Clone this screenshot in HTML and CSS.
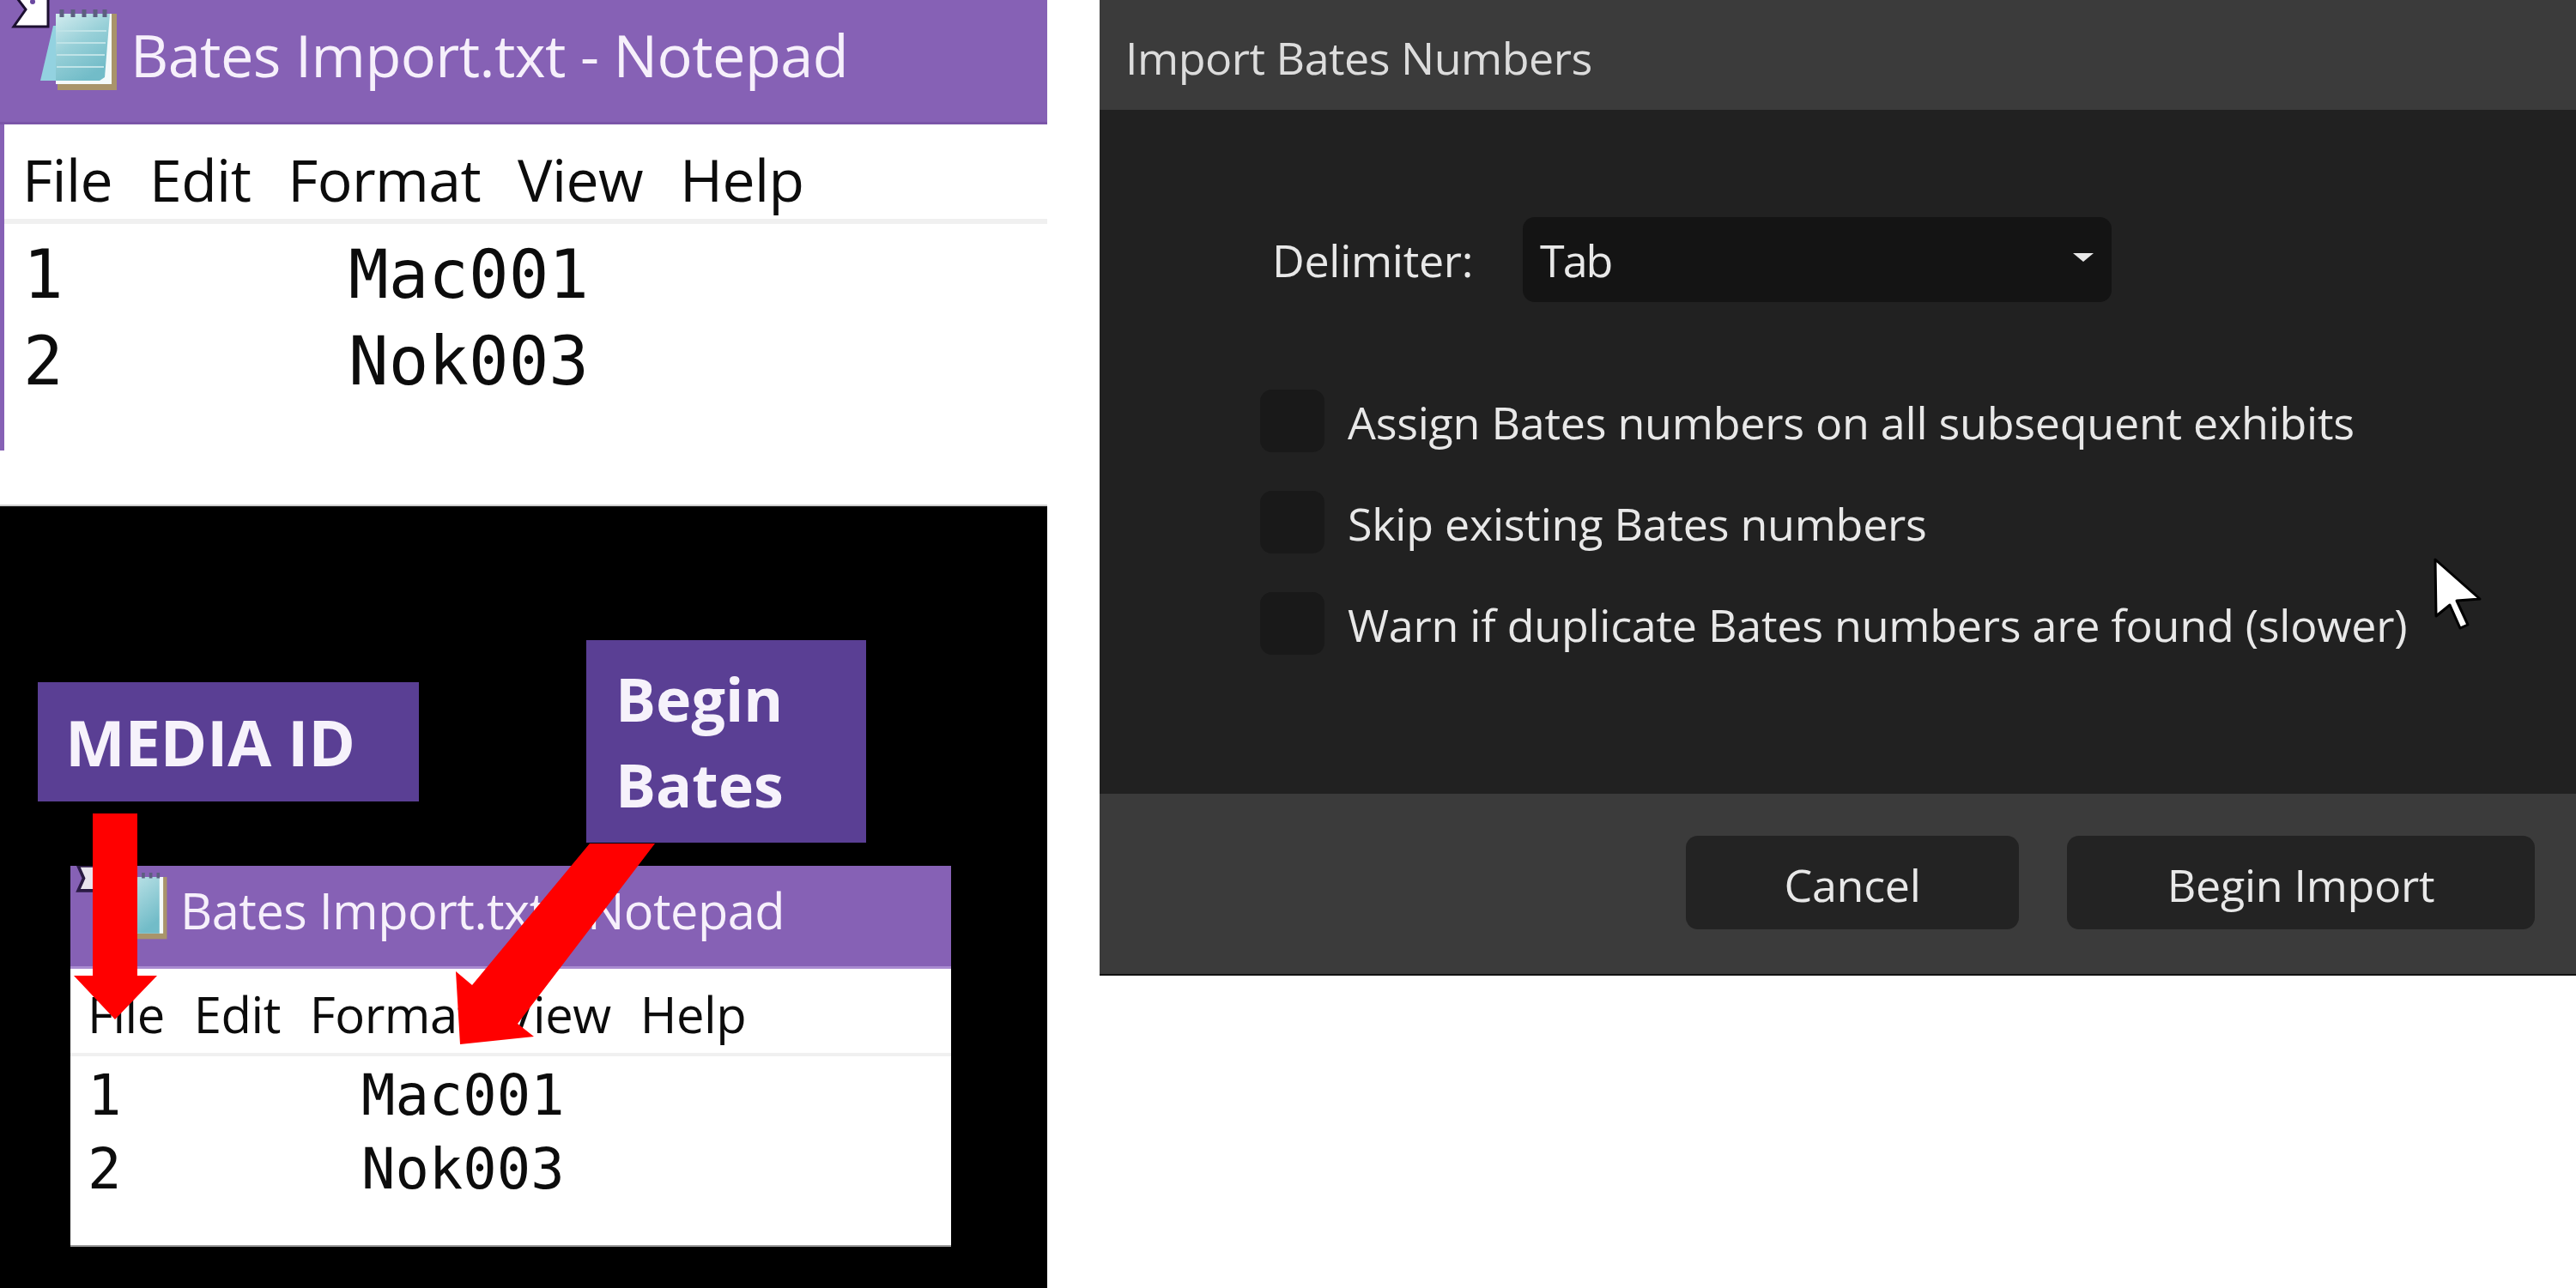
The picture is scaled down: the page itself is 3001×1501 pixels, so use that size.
FILE: index.html
```html
<!DOCTYPE html>
<html lang="en">
<head>
<meta charset="utf-8">
<title>Import Bates Numbers</title>
<link rel="stylesheet" href="styles.css">
</head>
<body>
<main class="page">
  <section class="left">
    <div class="notepad notepad-large">
      <header class="np-title">
        <svg class="np-icon" viewBox="0 0 200 130" aria-hidden="true">
          <defs>
            <linearGradient id="paper" x1="0" y1="0" x2="0.5" y2="1">
              <stop offset="0" stop-color="#d3ecef"/>
              <stop offset="0.5" stop-color="#98d0d8"/>
              <stop offset="1" stop-color="#72bcc8"/>
            </linearGradient>
          </defs>
          <path d="M20 -2L30 11L16 31H56V-2Z" fill="#fff" stroke="#1c1030" stroke-width="3"/>
          <circle cx="38" cy="2" r="3" fill="#6a48a0"/>
          <path d="M47 94L62 30H68V94Z" fill="#93d2e0"/>
          <rect x="67" y="16" width="69" height="89" fill="#a9946a"/>
          <rect x="65" y="16" width="65" height="82" fill="#f4fafa"/>
          <path d="M65 16H128L122 90L116 94H65Z" fill="url(#paper)"/>
          <path d="M66 36H124M66 50H123M66 64H122M66 78H121" stroke="#bfe3e7" stroke-width="2"/>
          <path d="M72 11V20M85 11V20M98 11V20M111 11V20M122 11V20" stroke="#5c5f80" stroke-width="5"/>
        </svg>
        <span class="np-title-text">Bates Import.txt - Notepad</span>
      </header>
      <nav class="np-menu"><span>File</span><span>Edit</span><span>Format</span><span>View</span><span>Help</span></nav>
      <div class="np-body">
        <span>1</span><span>Mac001</span>
        <span>2</span><span>Nok003</span>
      </div>
    </div>

    <div class="annotated">
      <div class="notepad notepad-small">
        <header class="np-title">
          <svg class="np-icon" viewBox="0 0 200 130" aria-hidden="true">
            <defs>
              <linearGradient id="paper2" x1="0" y1="0" x2="0.5" y2="1">
                <stop offset="0" stop-color="#c3e6ea"/>
                <stop offset="1" stop-color="#72bcc8"/>
              </linearGradient>
            </defs>
            <path d="M15 0H42V40H15L24 20Z" fill="#e8e4ee" stroke="#2a1a44" stroke-width="5"/>
            <rect x="90" y="18" width="68" height="100" fill="#a9946a"/>
            <rect x="88" y="18" width="64" height="91" fill="#f4fafa"/>
            <rect x="88" y="18" width="58" height="91" fill="url(#paper2)"/>
            <path d="M96 11V20M108 11V20M120 11V20M132 11V20M144 11V20" stroke="#5c5f80" stroke-width="5"/>
          </svg>
          <span class="np-title-text">Bates Import.txt - Notepad</span>
        </header>
        <nav class="np-menu"><span>File</span><span>Edit</span><span>Format</span><span>View</span><span>Help</span></nav>
        <div class="np-body">
          <span>1</span><span>Mac001</span>
          <span>2</span><span>Nok003</span>
        </div>
      </div>
      <div class="callout callout-media">MEDIA ID</div>
      <div class="callout callout-bates">Begin<br>Bates</div>
      <svg class="arrows" viewBox="0 0 1220 913" aria-hidden="true">
        <path d="M108 360H160V549H183L134 600L86 549H108Z" fill="#ff0000"/>
        <path d="M687 395H763L603 605L622 620L536 629L531 544L550 560Z" fill="#ff0000"/>
      </svg>
    </div>
  </section>

  <section class="dialog">
    <header class="dlg-title">Import Bates Numbers</header>
    <div class="dlg-body">
      <div class="dlg-field">
        <span class="dlg-label">Delimiter:</span>
        <div class="dlg-select"><span>Tab</span><i class="dlg-caret"></i></div>
      </div>
      <ul class="dlg-checks">
        <li><i class="dlg-box"></i>Assign Bates numbers on all subsequent exhibits</li>
        <li><i class="dlg-box"></i>Skip existing Bates numbers</li>
        <li><i class="dlg-box"></i>Warn if duplicate Bates numbers are found (slower)</li>
      </ul>
      <svg class="cursor" viewBox="0 0 60 90" aria-hidden="true">
        <path d="M4 4L5 70L21 57L33 84L42 80L29 52L56 50Z" fill="#fff" stroke="#000" stroke-width="3" stroke-linejoin="round"/>
      </svg>
    </div>
    <footer class="dlg-footer">
      <button class="dlg-btn dlg-btn-cancel">Cancel</button>
      <button class="dlg-btn dlg-btn-import">Begin Import</button>
    </footer>
  </section>
</main>
</body>
</html>
```
FILE: styles.css
```css
* { box-sizing: border-box; }
html, body { margin: 0; padding: 0; background: #fff; }
.page {
  width: 3001px;
  height: 1501px;
  display: grid;
  grid-template-columns: 1220px 1720px;
  column-gap: 61px;
  align-items: start;
  overflow: hidden;
  filter: blur(0.7px);
}
.left { display: flex; flex-direction: column; gap: 63px; height: 1501px; }

/* Notepad */
.notepad { background: #fff; color: #000; display: flex; flex-direction: column; }
.np-title { background: #8661b5; color: #f6f0fb; display: flex; align-items: center; position: relative; font-family: "Open Sans", sans-serif; }
.np-title-text { white-space: nowrap; }
.np-menu { display: flex; font-family: "Open Sans", sans-serif; color: #0c0c0c; }
.np-body { display: grid; font-family: "DejaVu Sans Mono", monospace; color: #0c0c0c; }
.np-icon { position: absolute; left: 0; top: 0; }

.notepad-large { height: 525px; border-left: 5px solid #8661b5; }
.notepad-large .np-title { height: 145px; margin-left: -5px; padding: 0 0 16px 152px; font-size: 68.5px; border-bottom: 3px solid #7a55a8; letter-spacing: -0.6px; }
.notepad-large .np-icon { width: 200px; height: 130px; }
.notepad-large .np-menu { height: 116px; padding: 16px 0 0 21px; gap: 43px; font-size: 67.9px; align-items: center; border-bottom: 6px solid #f0f0f0; letter-spacing: -0.6px; }
.notepad-large .np-body { padding: 9px 0 0 22px; grid-template-columns: 379px auto; justify-content: start; font-size: 77.5px; line-height: 101px; }

.annotated { position: relative; height: 913px; background: #000; border-top: 2px solid #ccc; padding: 419px 112px 50px 82px; flex: none; }
.notepad-small { height: 442px; box-shadow: 0 2px 0 #999; }
.notepad-small .np-title { height: 120px; padding: 0 0 14px 128px; font-size: 57.7px; border-bottom: 3px solid #a98bd0; letter-spacing: -0.5px; }
.notepad-small .np-icon { width: 145px; height: 94px; left: -2px; top: 0; }
.notepad-small .np-menu { height: 102px; padding: 6px 0 0 20px; gap: 34px; font-size: 58px; align-items: center; border-bottom: 4px solid #f0f0f0; letter-spacing: -0.5px; }
.notepad-small .np-body { padding: 2px 0 0 20px; grid-template-columns: 319px auto; justify-content: start; font-size: 65.5px; line-height: 86px; }

.callout { position: absolute; background: #5a3f94; color: #f6f2fb; font-family: "Open Sans", sans-serif; font-weight: 700; }
.callout-media { left: 44px; top: 205px; width: 444px; height: 139px; padding-left: 32px; font-size: 74px; line-height: 139px; letter-spacing: -0.3px; }
.callout-bates { left: 683px; top: 156px; width: 326px; height: 236px; padding: 18px 0 0 34px; font-size: 70px; line-height: 100px; }
.arrows { position: absolute; left: 0; top: -2px; width: 1220px; height: 913px; }

/* Dialog */
.dialog { width: 1720px; height: 1137px; background: #3b3b3b; color: #e8e8e8; font-family: "Open Sans", sans-serif; display: flex; flex-direction: column; border-bottom: 2px solid #111; }
.dlg-title { height: 128px; padding: 4px 0 0 30px; display: flex; align-items: center; font-size: 52px; color: #dcdcdc; letter-spacing: -0.5px; }
.dlg-body { position: relative; background: #212121; height: 797px; padding: 125px 0 0 187px; }
.dlg-field { display: flex; align-items: center; height: 99px; margin-left: 14px; }
.dlg-label { font-size: 52px; letter-spacing: -0.3px; flex: 0 0 292px; }
.dlg-select { width: 686px; height: 99px; background: #141414; border-radius: 14px; display: flex; align-items: center; justify-content: space-between; padding: 0 21px 0 20px; font-size: 52px; letter-spacing: -2px; }
.dlg-caret { width: 0; height: 0; border-left: 12px solid transparent; border-right: 12px solid transparent; border-top: 10px solid #e8e8e8; margin-bottom: 6px; }
.dlg-checks { list-style: none; margin: 102px 0 0; padding: 0; display: flex; flex-direction: column; gap: 45px; }
.dlg-checks li { display: flex; align-items: center; gap: 27px; height: 73px; padding-top: 2px; font-size: 52px; letter-spacing: -0.25px; white-space: nowrap; }
.dlg-box { width: 75px; height: 73px; margin-top: -2px; background: #191919; border-radius: 14px; flex: none; }
.cursor { position: absolute; left: 1552px; top: 520px; width: 60px; height: 90px; }
.dlg-footer { flex: 1; display: flex; justify-content: flex-end; align-items: flex-start; gap: 56px; padding: 49px 48px 0 0; }
.dlg-btn { height: 109px; padding: 4px 0 0; background: #232323; color: #e8e8e8; border: 0; border-radius: 14px; font: 52px "Open Sans", sans-serif; letter-spacing: -0.3px; }
.dlg-btn-cancel { width: 388px; }
.dlg-btn-import { width: 545px; }
```
